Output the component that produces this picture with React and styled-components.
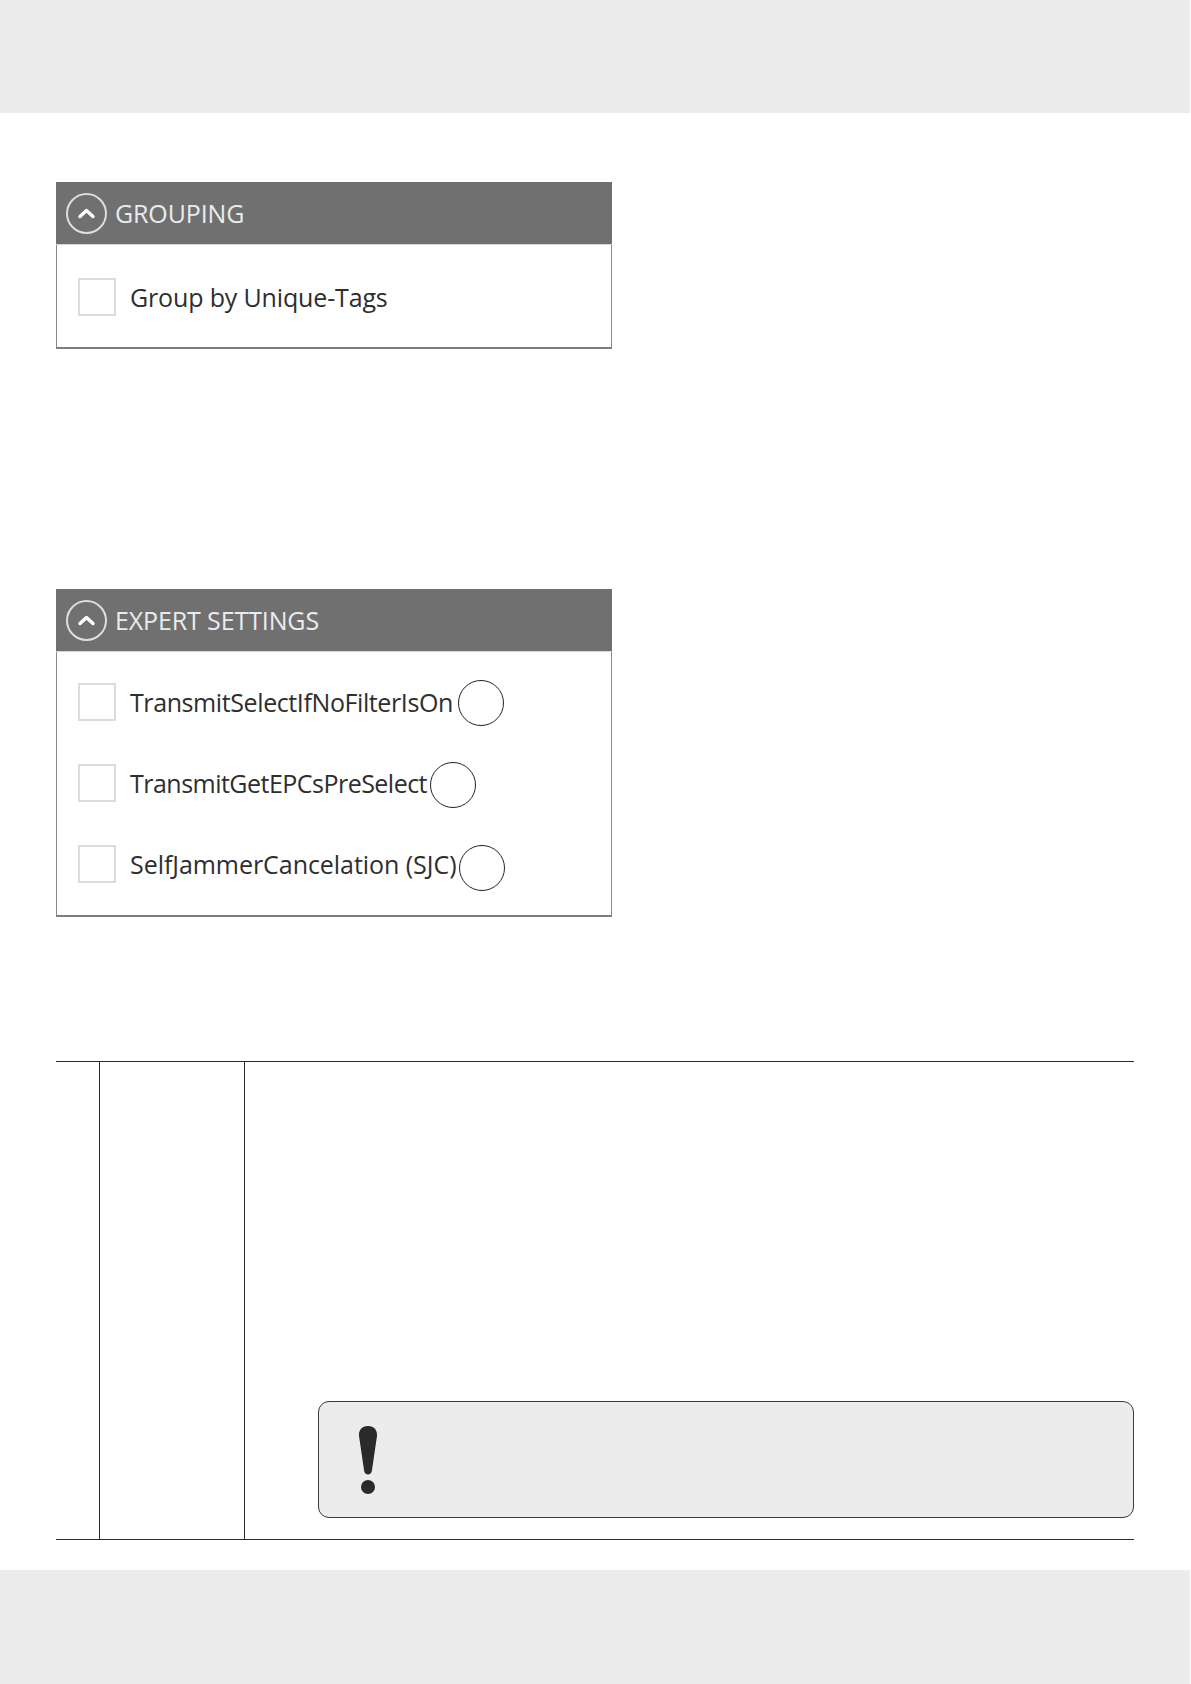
import React from 'react';
import styled, { createGlobalStyle } from 'styled-components';

const GlobalStyle = createGlobalStyle`
  html, body {
    margin: 0;
    padding: 0;
    background: #fff;
    font-family: "Open Sans", "Noto Sans", sans-serif;
  }
`;

const Page = styled.div`
  width: 1191px;
  height: 1684px;
  display: flex;
  flex-direction: column;
  overflow: hidden;
`;

const Band = styled.div`
  width: 1190px;
  height: ${props => props.size}px;
  flex-shrink: 0;
  background: #ececec;
`;

const Content = styled.main`
  flex: 1;
  padding: 69px 57px 0 56px;
  display: flex;
  flex-direction: column;
`;

const Panel = styled.section`
  width: 556px;
  height: ${props => props.size}px;
  margin-bottom: ${props => props.after}px;
  box-sizing: border-box;
  background: #fff;
  border-left: 1px solid #8a8a8a;
  border-right: 1px solid #8a8a8a;
  border-bottom: 2px solid #7d7d7d;
  display: flex;
  flex-direction: column;
`;

const PanelHeader = styled.header`
  height: 63px;
  margin: 0 -1px;
  padding-left: 9px;
  display: flex;
  align-items: center;
  gap: 7px;
  background: #707070;
  border-bottom: 1px solid #d4d4d4;
  box-sizing: border-box;
`;

const PanelTitle = styled.h2`
  margin: 0;
  font-size: 25px;
  font-weight: 400;
  letter-spacing: -0.12px;
  color: #e8ecec;
`;

const PanelBody = styled.div`
  flex: 1;
  padding-top: ${props => props.top}px;
  padding-left: 21px;
  display: flex;
  flex-direction: column;
  gap: 43px;
`;

const OptionRow = styled.div`
  height: 38px;
  display: flex;
  align-items: center;
`;

const CheckBox = styled.span`
  width: 38px;
  height: 38px;
  margin-right: 14px;
  box-sizing: border-box;
  border: 2px solid #dcdcdc;
  background: #fff;
`;

const OptionLabel = styled.span`
  font-size: 25px;
  letter-spacing: ${props => props.tracking}px;
  color: #2e2e2e;
  white-space: nowrap;
`;

const Callout = styled.span`
  width: 46px;
  height: 46px;
  margin: ${props => -4 + props.drop}px 0 ${props => -4 - props.drop}px ${props => props.gap}px;
  flex-shrink: 0;
  box-sizing: border-box;
  border: 1px solid #222;
  border-radius: 50%;
`;

const InfoTable = styled.div`
  height: 479px;
  display: grid;
  grid-template-columns: 44px 145px 1fr;
  border-top: 1px solid #2b2a29;
  border-bottom: 1px solid #2b2a29;
  box-sizing: border-box;
`;

const Cell = styled.div`
  border-right: ${props => (props.divided ? '1px solid #2b2a29' : 'none')};
`;

const NoteCell = styled.div`
  padding: 0 0 21px 73px;
  display: flex;
  flex-direction: column;
  justify-content: flex-end;
`;

const Note = styled.div`
  height: 117px;
  padding-left: 38px;
  display: flex;
  align-items: center;
  box-sizing: border-box;
  background: #ececec;
  border: 1px solid #3a3a3a;
  border-radius: 11px;
`;

const CollapseIcon = () => (
  <svg width="43" height="43" viewBox="0 0 43 43" fill="none">
    <circle cx="21.5" cy="21.5" r="19.5" stroke="#dedede" strokeWidth="2" />
    <path d="M15 24.5 L21.5 18.5 L28 24.5" stroke="#fff" strokeWidth="3.4" strokeLinecap="round" strokeLinejoin="round" />
  </svg>
);

const WarningIcon = () => (
  <svg width="22" height="70" viewBox="0 0 22 70" fill="#2b2a29">
    <path d="M11 1 C17 1 20.5 5 20 11 L15 45 C14.5 51 7.5 51 7 45 L2 11 C1.5 5 5 1 11 1 Z" />
    <circle cx="11" cy="62" r="7" />
  </svg>
);

const expertOptions = [
  { label: 'TransmitSelectIfNoFilterIsOn', tracking: -0.4, gap: 5, drop: 1 },
  { label: 'TransmitGetEPCsPreSelect', tracking: -0.52, gap: 3, drop: 2 },
  { label: 'SelfJammerCancelation (SJC)', tracking: -0.05, gap: 3, drop: 4 },
];

function App() {
  return (
    <Page>
      <GlobalStyle />
      <Band size={113} />
      <Content>
        <Panel size={167} after={240}>
          <PanelHeader>
            <CollapseIcon />
            <PanelTitle>GROUPING</PanelTitle>
          </PanelHeader>
          <PanelBody top={33}>
            <OptionRow>
              <CheckBox />
              <OptionLabel tracking={-0.15}>Group by Unique-Tags</OptionLabel>
            </OptionRow>
          </PanelBody>
        </Panel>

        <Panel size={328} after={144}>
          <PanelHeader>
            <CollapseIcon />
            <PanelTitle>EXPERT SETTINGS</PanelTitle>
          </PanelHeader>
          <PanelBody top={31}>
            {expertOptions.map(option => (
              <OptionRow key={option.label}>
                <CheckBox />
                <OptionLabel tracking={option.tracking}>{option.label}</OptionLabel>
                <Callout gap={option.gap} drop={option.drop} />
              </OptionRow>
            ))}
          </PanelBody>
        </Panel>

        <InfoTable>
          <Cell divided />
          <Cell divided />
          <NoteCell>
            <Note>
              <WarningIcon />
            </Note>
          </NoteCell>
        </InfoTable>
      </Content>
      <Band size={114} />
    </Page>
  );
}

export default App;
